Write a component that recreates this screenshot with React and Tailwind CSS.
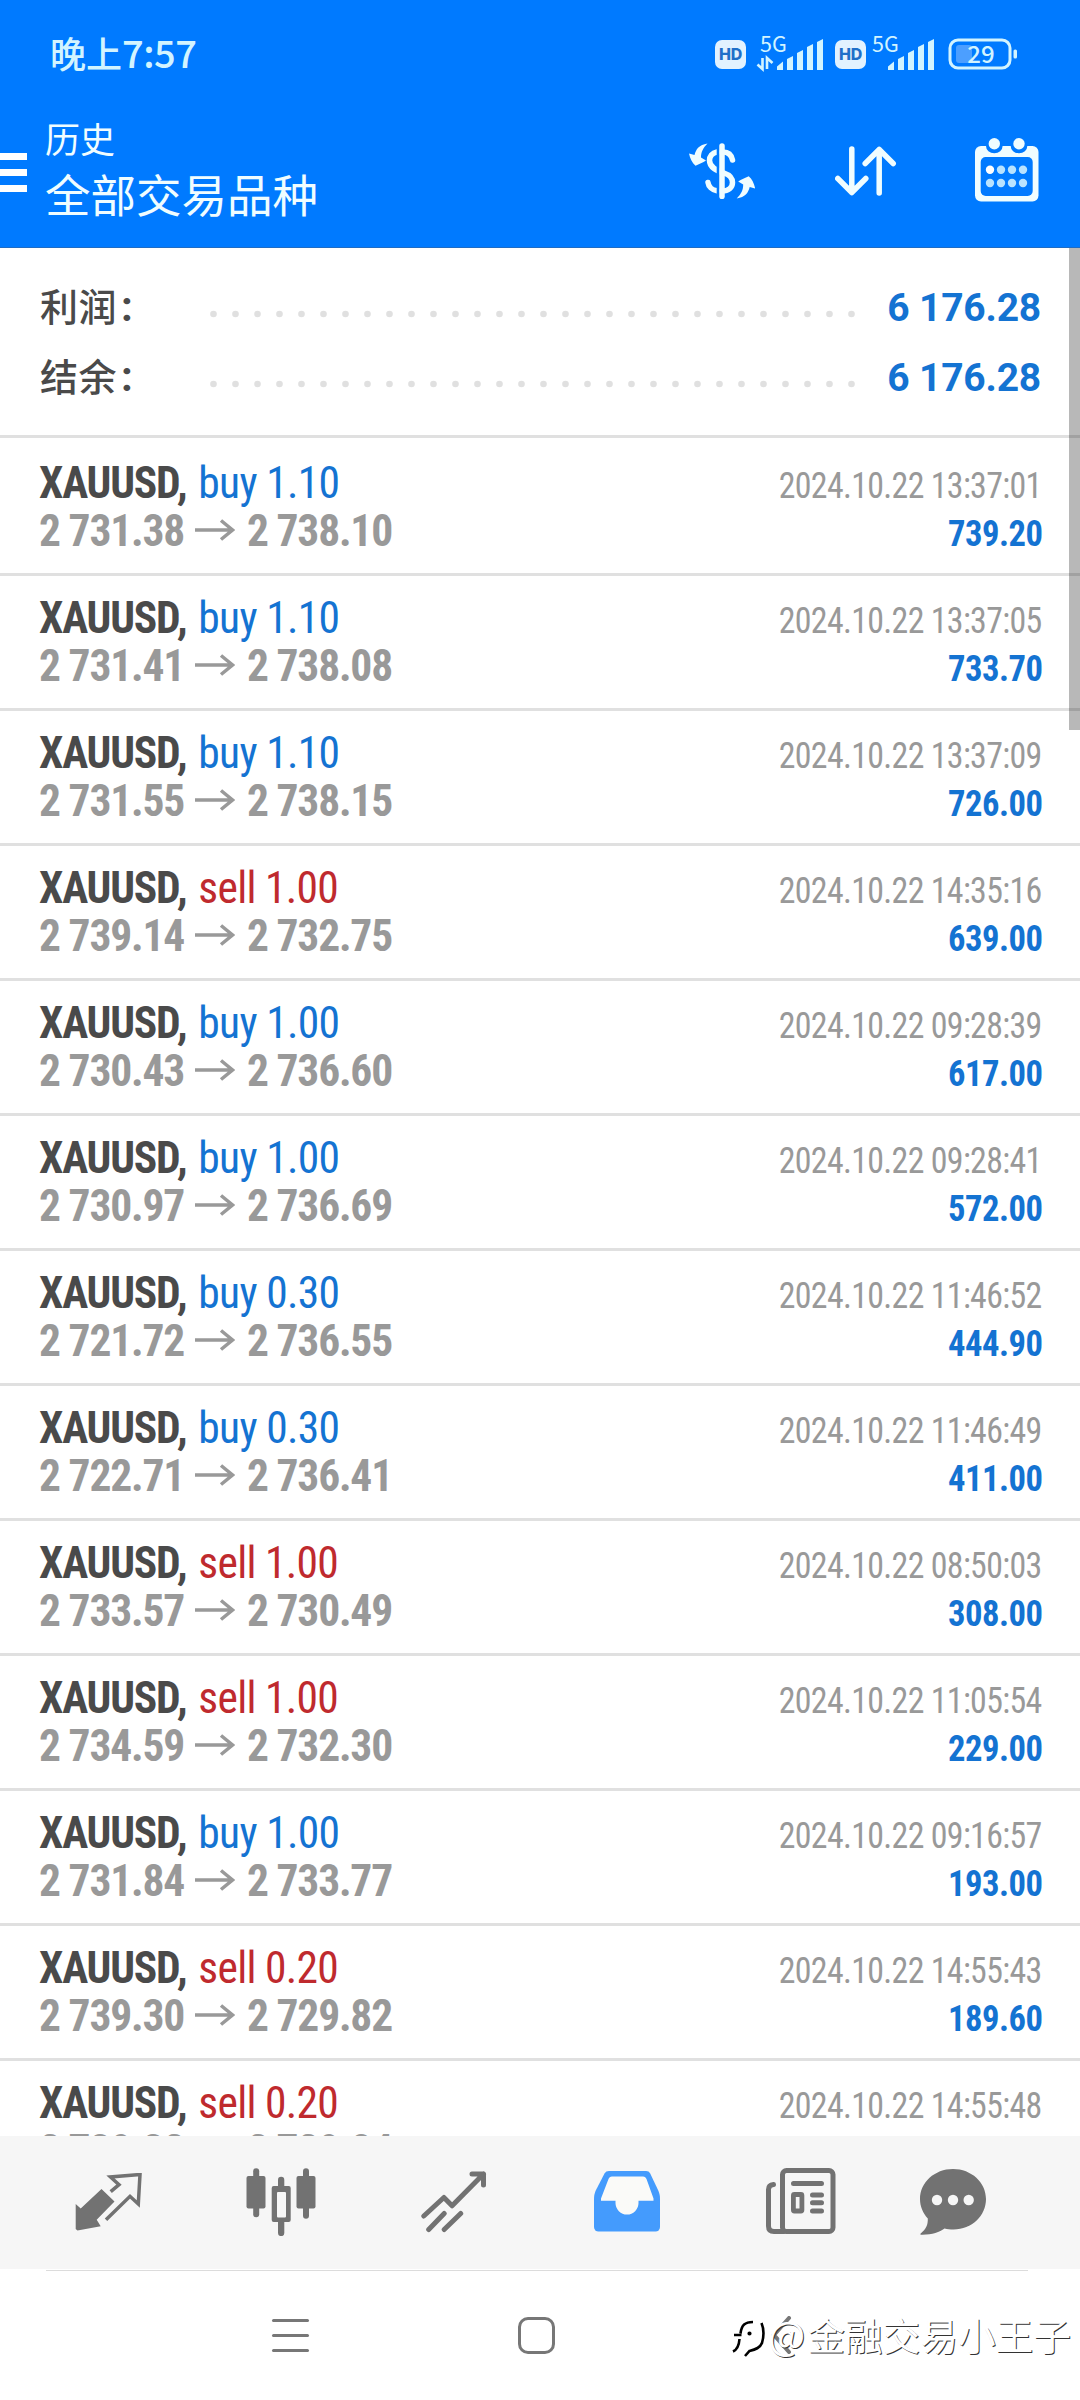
const DEALS = [
  { side: "buy",  lots: "1.10", open: "2 731.38", close: "2 738.10", time: "2024.10.22 13:37:01", profit: "739.20" },
  { side: "buy",  lots: "1.10", open: "2 731.41", close: "2 738.08", time: "2024.10.22 13:37:05", profit: "733.70" },
  { side: "buy",  lots: "1.10", open: "2 731.55", close: "2 738.15", time: "2024.10.22 13:37:09", profit: "726.00" },
  { side: "sell", lots: "1.00", open: "2 739.14", close: "2 732.75", time: "2024.10.22 14:35:16", profit: "639.00" },
  { side: "buy",  lots: "1.00", open: "2 730.43", close: "2 736.60", time: "2024.10.22 09:28:39", profit: "617.00" },
  { side: "buy",  lots: "1.00", open: "2 730.97", close: "2 736.69", time: "2024.10.22 09:28:41", profit: "572.00" },
  { side: "buy",  lots: "0.30", open: "2 721.72", close: "2 736.55", time: "2024.10.22 11:46:52", profit: "444.90" },
  { side: "buy",  lots: "0.30", open: "2 722.71", close: "2 736.41", time: "2024.10.22 11:46:49", profit: "411.00" },
  { side: "sell", lots: "1.00", open: "2 733.57", close: "2 730.49", time: "2024.10.22 08:50:03", profit: "308.00" },
  { side: "sell", lots: "1.00", open: "2 734.59", close: "2 732.30", time: "2024.10.22 11:05:54", profit: "229.00" },
  { side: "buy",  lots: "1.00", open: "2 731.84", close: "2 733.77", time: "2024.10.22 09:16:57", profit: "193.00" },
  { side: "sell", lots: "0.20", open: "2 739.30", close: "2 729.82", time: "2024.10.22 14:55:43", profit: "189.60" },
  { side: "sell", lots: "0.20", open: "2 739.32", close: "2 729.84", time: "2024.10.22 14:55:48", profit: "189.60" },
];

const SUMMARY = [
  { label: "利润", value: "6 176.28" },
  { label: "结余", value: "6 176.28" },
];

export default function App() {
  return (
    <div className="relative flex h-[2400px] w-[1080px] flex-col overflow-hidden bg-white font-['Roboto','Noto_Sans_CJK_SC',sans-serif]">
      <header className="flex h-[248px] shrink-0 flex-col border-b border-[#1f6cc4] bg-[#007aff] font-['Noto_Sans_CJK_SC',sans-serif] text-[#f0fdff]">
        <StatusBar />
        <TitleBar />
      </header>

      <main className="relative flex min-h-0 flex-1 flex-col overflow-hidden">
        <section className="flex h-[190px] shrink-0 flex-col border-b-[3px] border-[#e0e0e0] pt-[24px] pr-[39px] pl-10">
          {SUMMARY.map((s) => <SummaryLine key={s.label} {...s} />)}
        </section>
        {DEALS.map((d, i) => <Deal key={i} {...d} />)}
        {/* scroll thumb */}
        <div className="absolute top-0 right-0 h-[482px] w-[11px] bg-black/28" />
      </main>

      <TabBar />
      <SystemNav />
    </div>
  );
}

function StatusBar() {
  return (
    <div className="flex h-[108px] shrink-0 items-center justify-between pr-[62px] pl-[50px] text-[#d2f4ff]">
      <div className="mb-[5px] flex items-baseline text-[36px] leading-[40px] font-medium">
        晚上<span className="text-[38px] tracking-[-0.5px]">7:57</span>
      </div>
      <div className="flex items-center">
        <HdBadge />
        <Signal transfer />
        <HdBadge />
        <Signal />
        <svg width="70" height="40" viewBox="0 -4 70 40" className="ml-[2px]">
          <rect x="2" y="2" width="60" height="28" rx="8" fill="none" stroke="currentColor" strokeWidth="3" />
          <rect x="8" y="7" width="16" height="18" rx="3" fill="#4c9fff" />
          <rect x="65.500" y="11.500" width="3.500" height="9" rx="1.500" fill="currentColor" />
          <text x="33" y="25" textAnchor="middle" fontSize="24" fontWeight="500" fill="currentColor">29</text>
        </svg>
      </div>
    </div>
  );
}

function HdBadge() {
  return (
    <div className="flex h-[29px] w-[31px] items-center justify-center rounded-[7px] bg-[#e2f2ff] font-['Inter',sans-serif] text-[16px] font-extrabold tracking-[-0.300px] text-[#1f6fc8]">
      HD
    </div>
  );
}

function Signal({ transfer }) {
  return (
    <svg width="80" height="54" viewBox="0 -9 80 54" className={transfer ? "ml-[9px]" : ""}>
      <text x={transfer ? 5 : 6} y="16" fontSize="21.500" fill="currentColor">5G</text>
      {transfer && (
        <path d="M7.500 22v11L2.500 28.500M12 33V22l5.500 5" fill="none" stroke="currentColor" strokeWidth="2.600" />
      )}
      <g fill="currentColor">
        <path d="M22 34v-3.500l6-5V34z" />
        <path d="M32 34V23l6-3v14z" />
        <path d="M42 34V17l6-3v20z" />
        <path d="M52 34V11l6-3v26z" />
        <path d="M62 34V6l6-3v31z" />
      </g>
    </svg>
  );
}

function TitleBar() {
  return (
    <div className="flex h-[126px] items-center justify-between pr-[41px]">
      <div className="flex items-center">
        <div className="mt-[3px] flex w-[27px] flex-col gap-[9px]">
          <span className="h-[7px] bg-white" />
          <span className="h-[7px] bg-white" />
          <span className="h-[7px] bg-white" />
        </div>
        <div className="mb-[3px] ml-[18px]">
          <div className="text-[35px] leading-[47px]">历史</div>
          <div className="text-[45.500px] leading-[64px]">全部交易品种</div>
        </div>
      </div>
      <div className="flex items-center">
        <svg width="66" height="56" viewBox="0 0 66 56" fill="none" stroke="currentColor" strokeWidth="5.500" strokeLinecap="round">
          <path d="M33 9c6-.3 9.500 3 10.500 8M28 9c-5 1-7.500 4.500-7.500 8.500 0 7 7 10 14.500 12.500 6 2 8.500 5 8.500 9.500 0 5-4 8.500-10.500 8.500M19 39.500c.5 4 4 7.500 9 8.300" />
          <path d="M29.200 1v54" stroke="#007aff" strokeWidth="3" />
          <path d="M33 3v50.500" />
          <g fill="currentColor" stroke="none">
            <path id="swap" d="M18.500.5C10 2 7 6 5.500 12L0 10.500c1 4.500 3 9.500 6.500 12.200 3.500-1.700 7.500-3.200 10.500-5.200l-5-3c0-5.500 2-9.500 6.500-14z" />
            <use href="#swap" transform="rotate(180 33.100 28)" />
          </g>
        </svg>
        <svg width="62" height="50" viewBox="0 0 62 50" fill="none" stroke="currentColor" strokeWidth="5.500" strokeLinecap="round" strokeLinejoin="round" className="ml-20">
          <path d="M16.800 3v43.500M2.800 32.500l14 14 14-14M44.200 47V3.500M30.200 17.500l14-14 14 14" />
        </svg>
        <svg width="64" height="64" viewBox="0 0 64 64" fill="currentColor" className="mb-[2px] ml-[78px]">
          <rect y="8" width="63.500" height="55.500" rx="6" />
          <rect x="5.700" y="19" width="52" height="39" rx="5" fill="#007aff" />
          <path d="M11 7v1a8.300 7.300 0 0 0 16.600 0V7zM35.700 7v1a8.300 7.300 0 0 0 16.600 0V7z" fill="#007aff" />
          <circle cx="19.300" cy="5.700" r="5.700" />
          <circle cx="44" cy="5.700" r="5.700" />
          {[31.7, 45].map((y) => [15, 26, 37, 48].map((x) => (
            <circle key={`${x}-${y}`} cx={x} cy={y} r="4.200" fill={x === 15 && y < 40 ? "#fff" : "#b9e3ff"} />
          )))}
        </svg>
      </div>
    </div>
  );
}

function SummaryLine({ label, value }) {
  return (
    <div className="flex h-[70px] items-center text-[#4a4a4a]">
      <div className="flex w-[170px] items-baseline text-[38px] leading-[60px] font-medium tracking-[0.500px]">
        {label}<span className="ml-[4px] font-['Roboto',sans-serif] text-[42px] font-bold">:</span>
      </div>
      <svg width="646" height="8" viewBox="0 0 646 8" className="mt-[13px]">
        {Array.from({ length: 30 }, (_, i) => (
          <circle key={i} cx={3.5 + i * 22} cy="4" r="3.300" fill="#e0e0e0" />
        ))}
      </svg>
      <div className="mt-[2px] ml-auto text-[39px] font-bold tracking-[-0.200px] text-[#1473d2]">{value}</div>
    </div>
  );
}

function Deal({ side, lots, open, close, time, profit }) {
  return (
    <div className="flex h-[135px] shrink-0 flex-col justify-end border-b-[3px] border-[#e0e0e0] pr-[38px] pb-[17px] pl-[39px] font-['Roboto_Condensed',sans-serif] nth-2:h-[138px]">
      <div className="flex h-12 items-baseline justify-between leading-[48px]">
        <div className="flex items-baseline gap-[12px] text-[43.500px] tracking-[-0.700px]">
          <span className="font-bold tracking-[-1.200px] text-[#4a4a4a]">XAUUSD,</span>
          <span className={side === "buy" ? "text-[#1473d2]" : "text-[#bf2a2e]"}>{side} {lots}</span>
        </div>
        <div className="origin-right scale-x-94 text-[36px] tracking-[-0.700px] text-[#999]">{time}</div>
      </div>
      <div className="flex h-12 items-baseline justify-between leading-[48px] font-bold">
        <div className="flex items-center text-[43.500px] tracking-[-1.200px] text-[#999]">
          {open}
          <svg width="40" height="22" viewBox="0 0 40 22" fill="none" stroke="currentColor" strokeWidth="3.500" className="mr-[12px] mb-[4px] ml-[11px]">
            <path d="M0 11h38M26 1.500l11.500 9.500L26 20.500" />
          </svg>
          {close}
        </div>
        <div className="origin-right scale-x-96 text-[36px] tracking-[-0.500px] text-[#1473d2]">{profit}</div>
      </div>
    </div>
  );
}

function TabBar() {
  return (
    <div className="flex h-[133px] shrink-0 items-center bg-[#f6f6f6] pb-[2px] pl-[75px] text-[#727272]">
      <svg width="67" height="58" viewBox="0 0 67 58">
        <path d="M.7 31l5 4.500L26.500 16 39.500 28.500 21.700 46.700l4 6.600L2.500 57.500.7 56z" fill="currentColor" />
        <path d="M35.700 18.700l8.300-7L35.500 4l29.500-2.500L63.300 31 55 23.300 31 46.700" fill="none" stroke="currentColor" strokeWidth="3.500" />
      </svg>
      <svg width="70" height="68" viewBox="0 0 70 68" fill="currentColor" className="ml-[104px]">
        <rect x=".5" y="8" width="19" height="32.500" rx="2" />
        <rect x="7.200" y=".3" width="6" height="49" rx="3" />
        <path d="M27.700 18h15a2 2 0 0 1 2 2v32a2 2 0 0 1-2 2h-15a2 2 0 0 1-2-2V20a2 2 0 0 1 2-2zM32 24a1 1 0 0 0-1 1v23.500a1 1 0 0 0 1 1h7a1 1 0 0 0 1-1V25a1 1 0 0 0-1-1z" fillRule="evenodd" />
        <path d="M32 20v-8a3 3 0 0 1 6.300 0v8zM32 52v13a3 3 0 0 0 6.300 0V52z" />
        <rect x="50.500" y="8" width="19" height="32.500" rx="2" />
        <rect x="57" y=".3" width="6" height="50.500" rx="3" />
      </svg>
      <svg width="66" height="62" viewBox="0 0 66 62" fill="none" stroke="currentColor" strokeWidth="5" strokeLinecap="round" strokeLinejoin="round" className="ml-[105px]">
        <path d="M2.800 45l20.100-18.500 8.200 8.300L62.500 3M51 3h11.500v11M7.700 58.500l15.500-16M23.200 58.500l16.500-16" />
      </svg>
      <svg width="67" height="61" viewBox="0 0 67 61" className="ml-[107px]">
        <path d="M15 0h37c2 0 3.300.8 4.200 2.500L64.500 20c1 2.500 1.500 5 1.500 8v28a4.500 4.500 0 0 1-4.500 4.500h-57A4.500 4.500 0 0 1 0 56V28c0-3 .5-5.500 1.500-8L10.500 2.500C11.500.8 13 0 15 0z" fill="#449bfd" />
        <path d="M18 5.500h31c1.800 0 2.800 1 3.500 2.500l7 19.500v2.200H44.500v2.300a11.500 11.500 0 0 1-23 0v-2.300H7v-2.200L14.500 8c.7-1.500 1.700-2.500 3.500-2.500z" fill="#fafaf8" />
      </svg>
      <svg width="70" height="67" viewBox="0 0 70 67" fill="none" stroke="currentColor" strokeWidth="5" strokeLinecap="round" className="ml-[105px]">
        <rect x="16.500" y="2.500" width="50.500" height="61" rx="4" />
        <path d="M7.500 16.500c-3.500.3-5 2-5 5V58c0 3.500 2 5.500 5.500 5.500h10" />
        <path d="M27.500 15.500h28M46.500 27h9M46.500 34.800h9M46.500 43h9" />
        <rect x="27.400" y="26.500" width="8.500" height="16.500" rx="1" strokeWidth="4.800" />
      </svg>
      <svg width="67" height="66" viewBox="0 0 67 66" className="ml-[84px]">
        <path d="M33 0c18.500 0 33 13.500 33 30S52 60.500 33.500 60.500c-3.500 0-6-.3-9-1-5 3.700-13 6.500-23.500 6.200-.8 0-1-.7-.3-1.200C6 60 8 56 7.800 49.500 3 44 0 37.500 0 30 0 13.500 14.500 0 33 0z" fill="currentColor" />
        <circle cx="17" cy="31" r="5.200" fill="#f6f6f6" />
        <circle cx="33" cy="31" r="5.200" fill="#f6f6f6" />
        <circle cx="48.700" cy="31" r="5.200" fill="#f6f6f6" />
      </svg>
    </div>
  );
}

function SystemNav() {
  return (
    <div className="relative h-[131px] shrink-0">
      <div className="mr-[52px] ml-[46px] h-px translate-y-px bg-[#dcdcdc]" />
      <div className="flex h-[130px] items-center pl-[272px] text-[#777]">
        <div className="flex w-[37px] flex-col gap-3">
          <span className="h-[3px] rounded-full bg-current" />
          <span className="h-[3px] rounded-full bg-current" />
          <span className="h-[3px] rounded-full bg-current" />
        </div>
        <div className="ml-[209px] h-[37px] w-[37px] rounded-[10px] border-[3.500px] border-current" />
        <svg width="21" height="38" viewBox="0 0 21 38" fill="none" stroke="currentColor" strokeWidth="4" strokeLinecap="round" className="ml-[216px]">
          <path d="M18 2L3 19l15 17" />
        </svg>
      </div>
      {/* watermark, sits over the back button */}
      <div className="absolute top-[39px] right-[9px] flex items-center">
        <svg width="34" height="40" viewBox="0 0 34 40" fill="none" stroke="#000" strokeWidth="2.600" className="mt-[10px]">
          <path d="M22 3C14 3 10.500 6 9.500 14.500M3 16h7.500M8.500 20C8 27 6.500 30.500 2 32.500M30.500 4c2.500 6 2.500 13 .5 20-2 5-6.500 6.500-12.500 8l-4.500 5" />
          <circle cx="18.500" cy="14.500" r=".8" fill="#000" />
        </svg>
        <div className="ml-[3px] flex items-baseline font-['Noto_Sans_CJK_SC',sans-serif] text-[37.700px] leading-[50px] text-white [text-shadow:1px_1px_0.500px_#333]">
          <span className="mr-[2px] text-[39px]">@</span>金融交易小王子
        </div>
      </div>
    </div>
  );
}
